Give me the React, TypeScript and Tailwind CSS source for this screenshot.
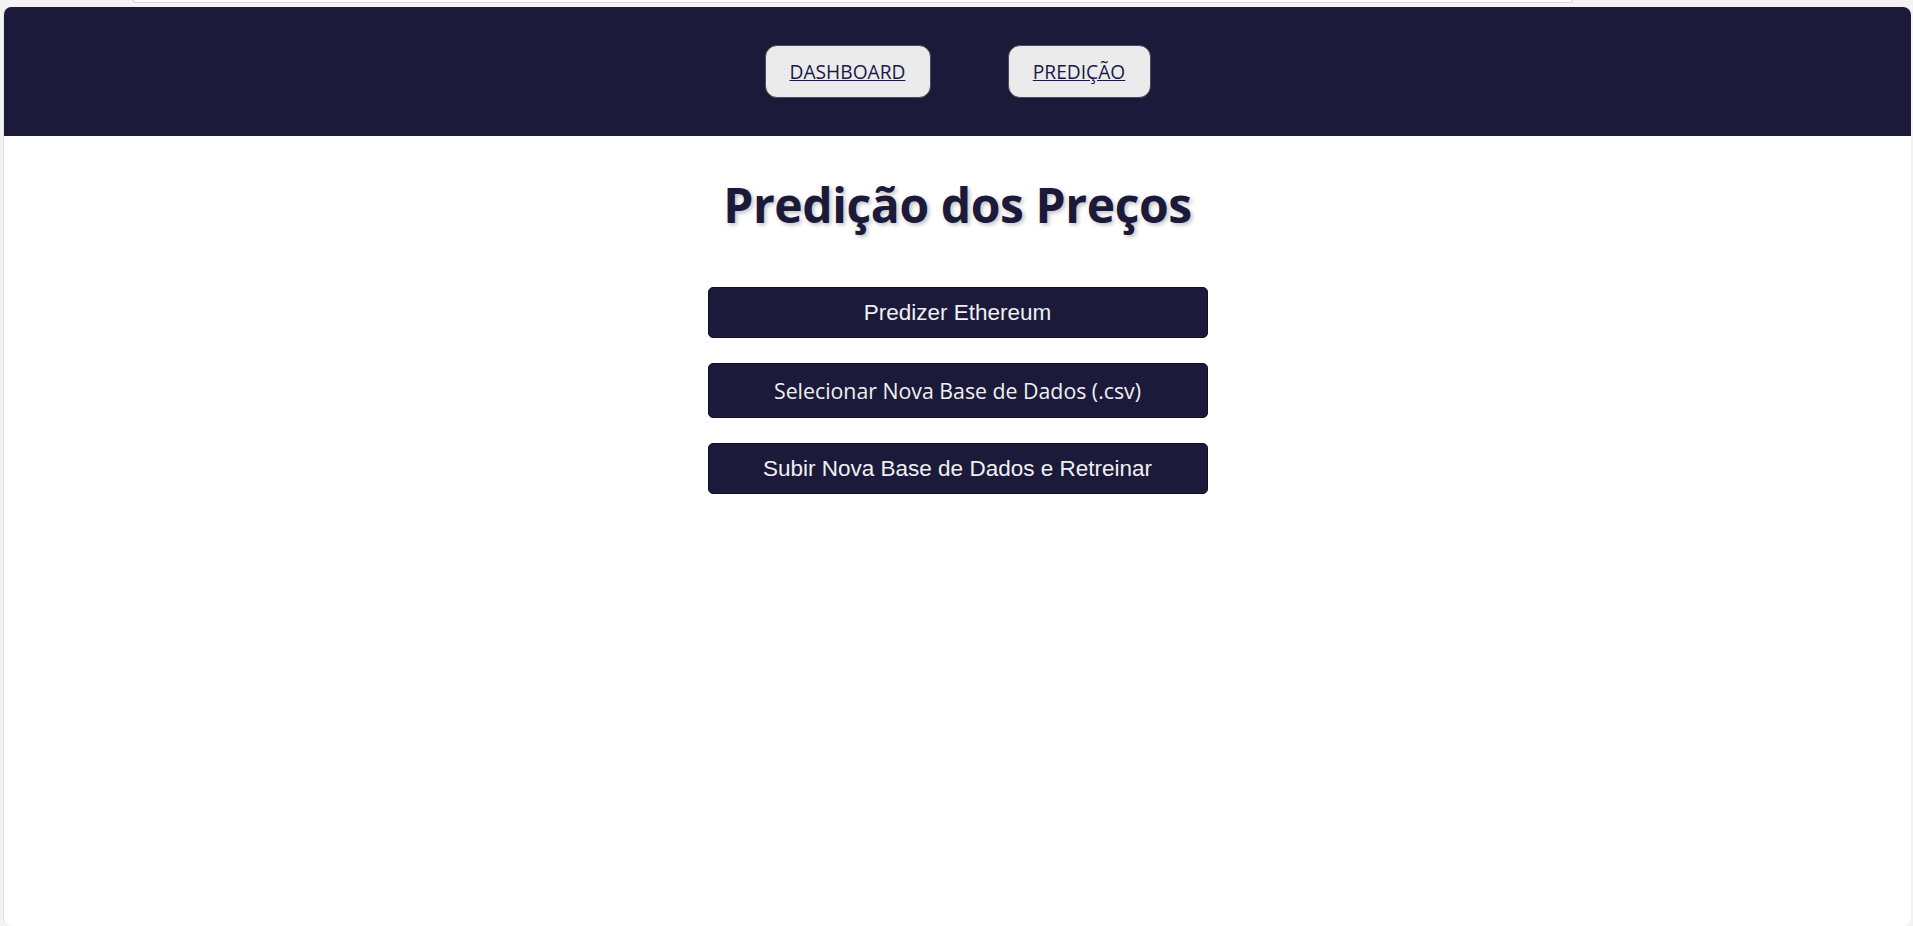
import React from "react";

export default function App() {
  const actions = [
    { label: "Predizer Ethereum", font: "font-['Liberation_Sans',Arial,sans-serif] text-[22.5px]", h: "h-[51px]" },
    { label: "Selecionar Nova Base de Dados (.csv)", font: "font-['Open_Sans',sans-serif] text-[21.3px]", h: "h-[55px]" },
    { label: "Subir Nova Base de Dados e Retreinar", font: "font-['Liberation_Sans',Arial,sans-serif] text-[22.5px]", h: "h-[51px]" },
  ];

  return (
    <div className="w-full h-[926px] bg-[#f3f3f3] overflow-hidden">
      <div className="h-[7px]">
        <div className="ml-[133px] w-[1440px] h-[3px] bg-white border-x border-b border-[#d6d6d6] rounded-b-[4px]" />
      </div>

      <div className="ml-[3px] w-[1908px] h-[919px] bg-white border-l border-[#e3e3e3] rounded-[8px] overflow-hidden flex flex-col">
        <header className="h-[129px] bg-[#1b1a3b] flex items-center justify-center gap-[77px]">
          <a href="#" className="w-[166px] h-[53px] pt-[2px] flex items-center justify-center bg-[#ebebeb] border border-[#4a4a5a] rounded-[12px] text-[#1a1948] underline font-['Open_Sans',sans-serif] text-[19.2px]">
            DASHBOARD
          </a>
          <a href="#" className="w-[143px] h-[53px] pt-[2px] flex items-center justify-center bg-[#ebebeb] border border-[#4a4a5a] rounded-[12px] text-[#1a1948] underline font-['Open_Sans',sans-serif] text-[19.2px]">
            PREDIÇÃO
          </a>
        </header>

        <main className="flex flex-col items-center">
          <h1 className="mt-[36px] leading-[66px] text-[48px] font-bold tracking-[-0.4px] text-[#1b1a3b] font-['Open_Sans',sans-serif] [text-shadow:2px_2px_4px_rgba(0,0,0,0.25)]">
            Predição dos Preços
          </h1>

          <div className="mt-[49px] flex flex-col gap-[25px]">
            {actions.map((a, i) => (
              <button
                key={i}
                className={`w-[500px] ${a.h} bg-[#1b1a3b] text-[#f0f0f0] rounded-[5px] border border-[#111028] flex items-center justify-center ${a.font}`}
              >
                {a.label}
              </button>
            ))}
          </div>
        </main>
      </div>
    </div>
  );
}
